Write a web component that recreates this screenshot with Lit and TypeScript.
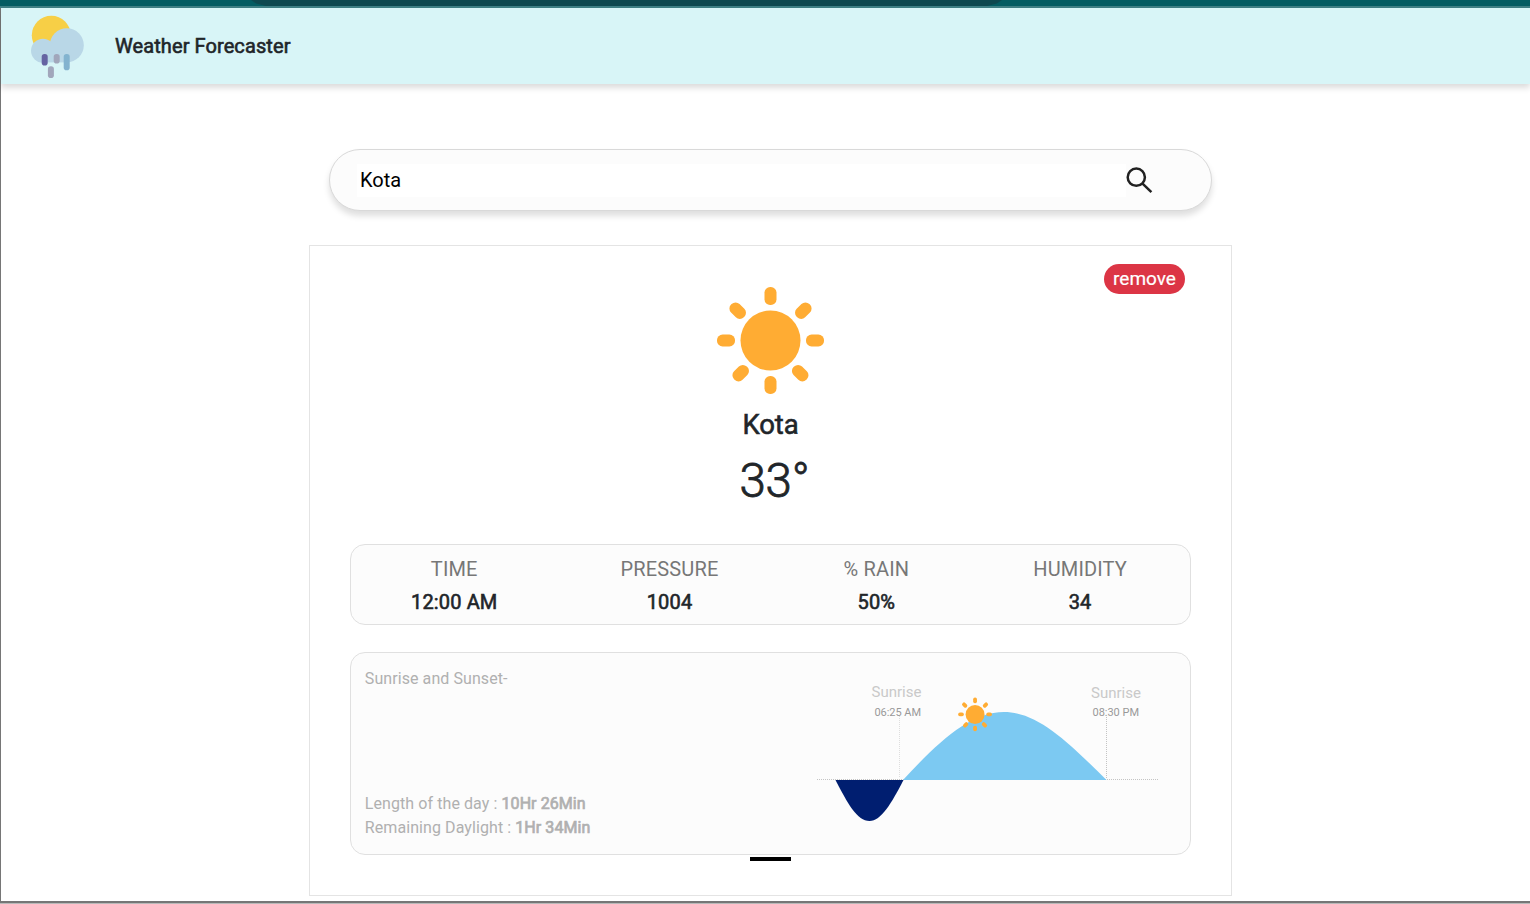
import { LitElement, html, css, svg } from "lit";
import { customElement, property } from "lit/decorators.js";

const sunShape = svg`
  <circle cx="54" cy="54" r="30"></circle>
  <rect x="48" y="0.5" width="12" height="18" rx="5.6"></rect>
  <rect x="48" y="89.5" width="12" height="18" rx="5.6"></rect>
  <rect x="0.5" y="48" width="18" height="12" rx="5.6"></rect>
  <rect x="89.5" y="48" width="18" height="12" rx="5.6"></rect>
  <rect x="12.2" y="18.2" width="18" height="12" rx="5.6" transform="rotate(45 21.2 24.2)"></rect>
  <rect x="77.8" y="18.2" width="18" height="12" rx="5.6" transform="rotate(-45 86.8 24.2)"></rect>
  <rect x="15.2" y="80.7" width="18" height="12" rx="5.6" transform="rotate(-45 24.2 86.7)"></rect>
  <rect x="74.7" y="80.7" width="18" height="12" rx="5.6" transform="rotate(45 83.7 86.7)"></rect>`;

@customElement("weather-header")
export class WeatherHeader extends LitElement {
  static styles = css`
    :host { display: flex; align-items: center; height: 76px; padding-left: 27px;
      background: #d8f5f7; box-shadow: 0 4px 6px rgba(0, 0, 0, 0.14); }
    .logo { width: 60px; height: 68px; flex: none; }
    .title { margin: 0 0 0 27px; font-size: 20px; line-height: 30px; font-weight: 400;
      letter-spacing: 0.09px; -webkit-text-stroke: 0.6px currentColor; }
  `;
  render() {
    return html`
      <svg class="logo" viewBox="28 12 60 68">
        <circle cx="51.3" cy="35.2" r="19.5" fill="#f7cf46"></circle>
        <g fill="#b9d7e7">
          <circle cx="66.8" cy="45.2" r="17"></circle>
          <circle cx="43" cy="50.8" r="12"></circle>
          <rect x="42" y="44" width="25" height="18.4"></rect>
        </g>
        <rect x="41.7" y="54" width="6" height="11.5" rx="2.8" fill="#6563a2"></rect>
        <rect x="53.7" y="54" width="6" height="9.5" rx="2.8" fill="#a1a6bb"></rect>
        <rect x="63.7" y="54" width="6" height="16.2" rx="2.8" fill="#83b3cf"></rect>
        <rect x="47.9" y="66.3" width="6" height="11.7" rx="2.8" fill="#a1a6bb"></rect>
      </svg>
      <h1 class="title">Weather Forecaster</h1>`;
  }
}

@customElement("search-bar")
export class SearchBar extends LitElement {
  @property() value = "";
  static styles = css`
    :host { display: flex; align-items: center; box-sizing: border-box; width: 883px; height: 62px;
      padding-left: 27px; border: 1px solid #d9d9d9; border-radius: 31px; background: #fcfcfc;
      box-shadow: 0 5px 6px rgba(0, 0, 0, 0.13); }
    .field { box-sizing: border-box; width: 769px; height: 33px; padding: 0 3px; border: 0; outline: 0;
      background: #fff; color: #000; font: 400 20px Roboto, sans-serif; }
    .icon { width: 28px; height: 28px; }
  `;
  render() {
    return html`
      <input class="field" .value=${this.value} />
      <svg class="icon" viewBox="0 0 28 28" fill="none" stroke="#212121" stroke-width="2.5">
        <circle cx="10.3" cy="11.2" r="8.6"></circle>
        <path d="M16.3 17.3 25.4 26.2"></path>
      </svg>`;
  }
}

@customElement("weather-stats")
export class WeatherStats extends LitElement {
  static items = [["TIME", "12:00 AM"], ["PRESSURE", "1004"], ["% RAIN", "50%"], ["HUMIDITY", "34"]];
  static styles = css`
    :host { display: flex; justify-content: space-between; box-sizing: border-box; height: 81px;
      padding: 8px 63px 0 60px; border: 1px solid #e0e0e0; border-radius: 15px; background: #fcfcfc; }
    .item { text-align: center; font-size: 20px; line-height: 33px; letter-spacing: 0.15px; }
    .item:nth-of-type(2) { margin: 0 1px 0 -1px; }
    .label { color: #777; }
    .value { color: #212529; -webkit-text-stroke: 0.6px currentColor; }
  `;
  render() {
    return WeatherStats.items.map(([label, value]) => html`
      <div class="item"><div class="label">${label}</div><div class="value">${value}</div></div>`);
  }
}

@customElement("sun-panel")
export class SunPanel extends LitElement {
  static styles = css`
    :host { display: flex; justify-content: space-between; box-sizing: border-box; height: 203px;
      border: 1px solid #e0e0e0; border-radius: 15px; background: #fcfcfc; color: #b0b0b0;
      font-size: 16px; line-height: 24px; }
    .info { display: flex; flex-direction: column; justify-content: space-between; padding: 14px 0 14px 13.8px;
      letter-spacing: 0.08px; }
    .strong { font-weight: 400; -webkit-text-stroke: 0.7px currentColor; }
    .chart { width: 370px; height: 201px; font-family: Roboto, sans-serif; }
    .name { font-size: 15px; fill: #c9c9c9; }
    .hour { font-size: 11px; fill: #999; }
    .dots { stroke: #c4c4c4; stroke-width: 1; stroke-dasharray: 1 1; fill: none; }
    .faint { stroke: #dedede; }
    .sun { fill: #ffac33; }
  `;
  render() {
    return html`
      <div class="info">
        <div>Sunrise and Sunset-</div>
        <div>
          <div>Length of the day : <span class="strong">10Hr 26Min</span></div>
          <div>Remaining Daylight : <span class="strong">1Hr 34Min</span></div>
        </div>
      </div>
      <svg class="chart" viewBox="820 653 370 201" overflow="visible">
        <path class="dots" d="M817 779.5H1158"></path>
        <path class="dots faint" d="M899.5 716V778"></path>
        <path class="dots" d="M1106.5 717V779"></path>
        <path fill="#7cc9f2" d="M903 780C940 740 971 712 1004 712C1038 712 1069 743 1106.5 780Z"></path>
        <path fill="#001e70" d="M835.5 780H903.5C891 804 881 821 869.5 821C857 821 848 804 835.5 780Z"></path>
        <text class="name" x="871.5" y="697" textLength="50">Sunrise</text>
        <text class="hour" x="874.5" y="716" textLength="46.5">06:25 AM</text>
        <text class="name" x="1091" y="697.5" textLength="50">Sunrise</text>
        <text class="hour" x="1092.5" y="716" textLength="46.5">08:30 PM</text>
        <g class="sun" transform="translate(958 697.4) scale(0.316)">${sunShape}</g>
      </svg>`;
  }
}

@customElement("weather-card")
export class WeatherCard extends LitElement {
  static styles = css`
    :host { display: flex; flex-direction: column; box-sizing: border-box; width: 923px; height: 651px;
      padding: 18px 40px 0; border: 1px solid #e4e4e4; }
    .remove { align-self: flex-end; width: 81px; height: 30px; margin-right: 6px; padding: 0; border: 0;
      border-radius: 15px; background: #dc3545; color: #fff; font: 400 19px/30px Roboto, sans-serif;
      -webkit-text-stroke: 0.2px currentColor; }
    .sun { align-self: center; width: 108px; height: 108px; margin: -8px 1px 0 0; fill: #ffac33; flex: none; }
    .city { margin: 12.5px 0 0; text-align: center; font-size: 27.5px; line-height: 36px; font-weight: 400;
      letter-spacing: -0.15px; -webkit-text-stroke: 0.6px currentColor; }
    .temp { margin: 9px 0 0; padding-left: 8px; text-align: center; font-size: 47.5px; line-height: 58px;
      font-weight: 300; letter-spacing: -0.2px; -webkit-text-stroke: 0.8px currentColor; }
    weather-stats { margin-top: 34.5px; flex: none; }
    sun-panel { margin-top: 27px; flex: none; }
    .handle { align-self: center; width: 41px; height: 4px; margin-top: 2px; background: #000; }
  `;
  render() {
    return html`
      <button class="remove">remove</button>
      <svg class="sun" viewBox="-0.5 -0.5 108 108">${sunShape}</svg>
      <h2 class="city">Kota</h2>
      <div class="temp">33°</div>
      <weather-stats></weather-stats>
      <sun-panel></sun-panel>
      <div class="handle"></div>`;
  }
}

@customElement("app-root")
export class AppRoot extends LitElement {
  static styles = css`
    :host { display: flex; flex-direction: column; box-sizing: border-box; width: 1530px; height: 904px;
      overflow: hidden; background: #fff; color: #212529; font-family: Roboto, sans-serif; }
    .strip { height: 6px; flex: none; padding-left: 251px; background: #045c62; border-bottom: 2px solid #3f8085; }
    .tab { width: 751px; height: 6px; background: #0e484f; clip-path: polygon(0 0, 100% 0, 99.3% 60%, 98% 100%, 2% 100%, 0.7% 60%); }
    .page { flex: 1; display: flex; flex-direction: column; align-items: center; min-height: 0;
      border-left: 1px solid #767676; border-bottom: 2px solid #767676; }
    weather-header { align-self: stretch; flex: none; }
    search-bar { margin: 65px 0 34px 10px; flex: none; }
    weather-card { margin-left: 10px; flex: none; }
    .edge { height: 1px; flex: none; background: #b9b9b9; }
  `;
  render() {
    return html`
      <div class="strip"><div class="tab"></div></div>
      <div class="page">
        <weather-header></weather-header>
        <search-bar value="Kota"></search-bar>
        <weather-card></weather-card>
      </div>
      <div class="edge"></div>`;
  }
}
